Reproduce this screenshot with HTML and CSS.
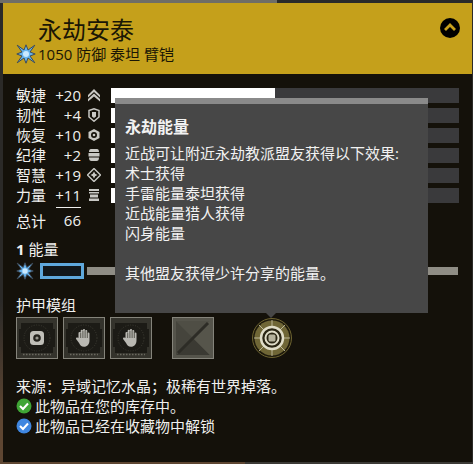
FILE: index.html
```html
<!DOCTYPE html>
<html lang="zh">
<head>
<meta charset="utf-8">
<title>永劫安泰</title>
<link rel="stylesheet" href="styles.css">
</head>
<body>
<svg class="defs" width="0" height="0" aria-hidden="true">
  <defs>
    <symbol id="burst" viewBox="0 0 20 20">
      <polygon points="10,0.800 12,6 18.800,1.200 14,8 19.200,10 14,12 18.800,18.800 12,14 10,19.200 8,14 1.200,18.800 6,12 0.800,10 6,8 1.200,1.200 8,6" fill="#66b4ee" stroke="#3d4a58" stroke-width="1" stroke-linejoin="round"/>
      <circle cx="10" cy="10" r="3" fill="#c9e9ff"/>
    </symbol>
    <symbol id="hand" viewBox="0 0 20 20">
      <path d="M5 9.500V5.500a1 1 0 0 1 2 0V3.500a1 1 0 0 1 2 0V2.800a1 1 0 0 1 2 0v.9a1 1 0 0 1 2 0V6a1 1 0 0 1 2 0v6c0 3.500-2 6-5 6-2.500 0-3.500-1.500-4.500-3.500L2.800 11c-.5-1.200 1-2 1.800-1z" fill="#b9b8b2"/>
      <path d="M7 5.500V10M9 3.500V10M11 3V10M13 4V10" stroke="#3a3a32" stroke-width=".7" fill="none"/>
    </symbol>
    <symbol id="modframe" viewBox="0 0 42 42">
      <rect x=".5" y=".5" width="41" height="41" fill="#34332c" stroke="#85847b"/>
      <path d="M5 6H37V12H39V30H37V36H5V30H3V12H5Z" fill="#1c1b16"/>
      <circle cx="21" cy="21" r="13" fill="none" stroke="#3c3b33" stroke-dasharray="1 1.500"/>
      <path d="M7 37.500H35" stroke="#6a695f" stroke-width="1.500" stroke-dasharray="1.500 1.500"/>
    </symbol>
  </defs>
</svg>
<main class="panel">
  <header class="head">
    <div class="head-main">
      <h1 class="title">永劫安泰</h1>
      <svg class="collapse" viewBox="0 0 20 20"><circle cx="10" cy="10" r="10" fill="#000"/><path d="M5 12 10 7 15 12" fill="none" stroke="#c7a01c" stroke-width="2.800"/></svg>
    </div>
    <div class="sub">
      <svg class="burst-head"><use href="#burst"/></svg>
      <span>1050 防御 泰坦 臂铠</span>
    </div>
  </header>
  <section class="content">
    <div class="stats">
      <div class="stat">
        <span class="stat-name">敏捷</span><span class="stat-val">+20</span>
        <svg class="stat-icon" viewBox="0 0 14 14"><path d="M1 7 7 1 13 7V9.500L7 4 1 9.500ZM1 11 7 5.500 13 11V13.500L7 8.500 1 13.500Z" fill="#c8c8c4"/></svg>
        <div class="bar"><div class="fill" style="width:164px"></div></div>
      </div>
      <div class="stat">
        <span class="stat-name">韧性</span><span class="stat-val">+4</span>
        <svg class="stat-icon" viewBox="0 0 14 14"><path d="M2 2.500 7 .8 12 2.500V9L7 13.200 2 9Z" fill="none" stroke="#c8c8c4" stroke-width="1.500"/><path d="M5 4H9V8.500L7 10 5 8.500Z" fill="#c8c8c4"/></svg>
        <div class="bar"><div class="fill" style="width:12px"></div></div>
      </div>
      <div class="stat">
        <span class="stat-name">恢复</span><span class="stat-val">+10</span>
        <svg class="stat-icon" viewBox="0 0 14 14"><path d="M7 1 12.500 4V10L7 13 1.500 10V4Z" fill="#c8c8c4"/><circle cx="7" cy="7" r="3" fill="#14110a"/><circle cx="7" cy="7" r="1.300" fill="#c8c8c4"/></svg>
        <div class="bar"><div class="fill" style="width:35px"></div></div>
      </div>
      <div class="stat">
        <span class="stat-name">纪律</span><span class="stat-val">+2</span>
        <svg class="stat-icon" viewBox="0 0 14 14"><path d="M4 1H10Q12 1 12 4H2Q2 1 4 1ZM1.500 5H12.500V8.500H1.500ZM2 9.500H12Q12 13 9.500 13H4.500Q2 13 2 9.500Z" fill="#c8c8c4"/></svg>
        <div class="bar"><div class="fill" style="width:8px"></div></div>
      </div>
      <div class="stat">
        <span class="stat-name">智慧</span><span class="stat-val">+19</span>
        <svg class="stat-icon" viewBox="0 0 14 14"><path d="M7 .5 13.500 7 7 13.500 .5 7Z" fill="none" stroke="#c8c8c4" stroke-width="1.400"/><path d="M7 3.500 8.200 5.800 10.500 7 8.200 8.200 7 10.500 5.800 8.200 3.500 7 5.800 5.800Z" fill="#c8c8c4"/></svg>
        <div class="bar"><div class="fill" style="width:150px"></div></div>
      </div>
      <div class="stat">
        <span class="stat-name">力量</span><span class="stat-val">+11</span>
        <svg class="stat-icon" viewBox="0 0 14 14"><path d="M2 1H12V3H2ZM2 4H12V5.500H2ZM3 6.500H11V9.500H3ZM2 10.500H12V13H2Z" fill="#c8c8c4"/></svg>
        <div class="bar"><div class="fill" style="width:40px"></div></div>
      </div>
      <div class="total">
        <span class="stat-name">总计</span><span class="total-val">66</span>
      </div>
    </div>

    <div class="energy-label"><b>1</b> 能量</div>
    <div class="energy">
      <svg class="burst-energy"><use href="#burst"/></svg>
      <div class="cell"></div>
      <div class="energy-rest"></div>
    </div>

    <div class="mods-label">护甲模组</div>
    <div class="mods">
      <svg class="mod" viewBox="0 0 42 42"><use href="#modframe"/><rect x="14" y="14" width="14" height="14" rx="3.500" fill="#c0bfb8"/><circle cx="21" cy="21" r="3.800" fill="#23221c"/><circle cx="21" cy="21" r="1.600" fill="#9a9990"/></svg>
      <svg class="mod" viewBox="0 0 42 42"><use href="#modframe"/><use href="#hand" x="10" y="10" width="22" height="22"/></svg>
      <svg class="mod" viewBox="0 0 42 42"><use href="#modframe"/><use href="#hand" x="10" y="10" width="22" height="22"/></svg>
      <svg class="mod mod-empty" viewBox="0 0 42 42">
        <rect x=".5" y=".5" width="41" height="41" fill="#55544b" stroke="#85847b"/>
        <path d="M4 4H38L21 21Z" fill="#4f4e45"/><path d="M4 38H38L21 21Z" fill="#3b3a33"/>
        <path d="M4 4V38L21 21Z" fill="#45443c"/><path d="M38 4V38L21 21Z" fill="#56554b"/>
        <path d="M36 6 6 36" stroke="#2d2c26" stroke-width="3"/>
      </svg>
      <svg class="mod-round" viewBox="0 0 40 40">
        <circle cx="20" cy="20" r="19.500" fill="#1e1a0c" stroke="#6e6431"/>
        <circle cx="20" cy="20" r="17.500" fill="#6f6636"/>
        <path d="M20 2V38M2 20H38M7 7 33 33M33 7 7 33" stroke="#cfcbb0" stroke-width=".8"/>
        <circle cx="20" cy="20" r="11" fill="#2a2614" stroke="#e0ddc8" stroke-width="2.500"/>
        <circle cx="20" cy="20" r="6.500" fill="#2a2614" stroke="#e0ddc8" stroke-width="2"/>
        <rect x="16.500" y="16.500" width="7" height="7" rx="1.500" fill="#b5b29c"/>
      </svg>
    </div>

    <div class="notes">
      <p class="note-source">来源：异域记忆水晶；极稀有世界掉落。</p>
      <p class="note"><svg class="check" viewBox="0 0 16 16"><circle cx="8" cy="8" r="7.500" fill="#3fa535"/><path d="M4 8 7 11 12 5.500" fill="none" stroke="#fff" stroke-width="2"/></svg>此物品在您的库存中。</p>
      <p class="note"><svg class="check" viewBox="0 0 16 16"><circle cx="8" cy="8" r="7.500" fill="#3f86e0"/><path d="M4 8 7 11 12 5.500" fill="none" stroke="#fff" stroke-width="2"/></svg>此物品已经在收藏物中解锁</p>
    </div>
  </section>
  <aside class="tip">
    <h2 class="tip-title">永劫能量</h2>
    <p class="tip-line">近战可让附近永劫教派盟友获得以下效果:</p>
    <p class="tip-line">术士获得</p>
    <p class="tip-line">手雷能量泰坦获得</p>
    <p class="tip-line">近战能量猎人获得</p>
    <p class="tip-line">闪身能量</p>
    <p class="tip-line tip-gap">其他盟友获得少许分享的能量。</p>
    <span class="tip-arrow"></span>
  </aside>
</main>
</body>
</html>
```
FILE: styles.css
```css
* { box-sizing: border-box; }
html, body { margin: 0; padding: 0; }
body {
  width: 473px;
  height: 464px;
  overflow: hidden;
  padding: 3px 1px 2px 3px;
  background:
    linear-gradient(90deg, #6f6d67 0 277px, #2a2a2a 277px) 0 0 / 100% 3px no-repeat,
    linear-gradient(90deg, #5e4632 0 245px, #3c3a36 245px) 0 100% / 100% 2px no-repeat,
    linear-gradient(180deg, #2b2a28 0 300px, #5e4632 420px) 0 0 / 3px 100% no-repeat,
    #2b2a28;
  font-family: "Open Sans", "Noto Sans CJK SC", sans-serif;
  font-size: 15px;
  color: #f0f0ee;
}
.defs { position: absolute; }
.panel {
  position: relative;
  width: 469px;
  height: 459px;
  background: #14110a;
}
.head {
  height: 71px;
  background: #c5a01b;
  color: #1a1605;
  padding: 0 12px 0 13px;
}
.head-main {
  display: flex;
  justify-content: space-between;
  align-items: center;
  height: 41px;
  padding: 13px 0 0 22px;
}
.title { margin: 0; font-size: 24px; font-weight: 400; line-height: 28px; }
.collapse { width: 20px; height: 20px; margin-top: -4px; }
.sub { display: flex; align-items: center; font-size: 15px; line-height: 20px; gap: 2px; }
.burst-head { width: 20px; height: 20px; flex: none; }
.content { padding: 11px 13px 0; }
.stats { display: flex; flex-direction: column; }
.stat { display: flex; align-items: center; height: 20px; }
.stat-name { width: 30px; line-height: 20px; }
.stat-val { width: 35px; text-align: right; line-height: 20px; }
.stat-icon { width: 14px; height: 14px; margin-left: 6px; flex: none; }
.bar { margin-left: 10px; width: 348px; height: 15px; background: #3a3a3c; }
.fill { height: 100%; background: #fff; }
.total { display: flex; height: 24px; margin-top: 2px; align-items: flex-end; }
.total-val { width: 25px; margin-left: 10px; text-align: right; border-top: 1px solid #f0f0ee; height: 24px; line-height: 24px; }
.energy-label { margin-top: 8px; line-height: 20px; }
.energy { display: flex; align-items: center; height: 20px; margin-top: 2px; }
.burst-energy { width: 18px; height: 18px; flex: none; }
.cell { width: 44px; height: 16px; margin-left: 6px; border: 3px solid #5fa8dc; background: #12171a; }
.energy-rest { width: 371px; height: 8px; margin-left: 3px; background: #8f8d85; }
.mods-label { margin-top: 14px; line-height: 20px; }
.mods { display: flex; align-items: center; margin-top: 2px; }
.mod { width: 42px; height: 42px; margin-right: 5px; flex: none; }
.mod-empty { margin-left: 15px; margin-right: 38px; }
.mod-round { width: 40px; height: 40px; flex: none; }
.notes { margin-top: 17px; }
.notes p { margin: 0; line-height: 20px; }
.note { display: flex; align-items: center; gap: 3px; }
.check { width: 16px; height: 16px; flex: none; }
.tip {
  position: absolute;
  left: 112px;
  top: 95px;
  width: 313px;
  height: 215px;
  background: #474747;
  border-top: 6px solid #8a8a8a;
  padding: 13px 10px 0;
  color: #f2f2f2;
}
.tip-title { margin: 0 0 6px; font-size: 16px; font-weight: 700; line-height: 20px; }
.tip-line { margin: 0; line-height: 20px; }
.tip-gap { margin-top: 20px; }
.tip-arrow {
  position: absolute;
  left: 151px;
  bottom: -5px;
  border-left: 5px solid transparent;
  border-right: 5px solid transparent;
  border-top: 5px solid #474747;
}
```
